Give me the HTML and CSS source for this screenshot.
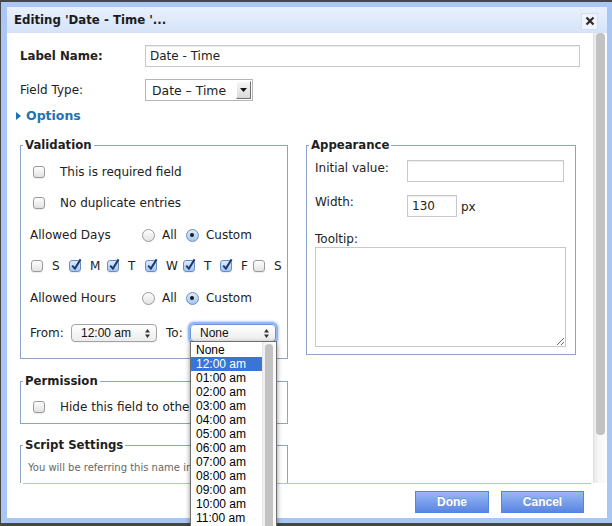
FILE: index.html
```html
<!DOCTYPE html>
<html>
<head>
<meta charset="utf-8">
<title>Editing</title>
<link rel="stylesheet" href="styles.css">
</head>
<body>
<div class="dialog">
  <div class="titlebar">
    <span class="title">Editing 'Date - Time '...</span>
    <span class="close"><svg width="10" height="10" viewBox="0 0 10 10"><path d="M1.5 1.5L8.5 8.5M8.5 1.5L1.5 8.5" stroke="#2b2b2b" stroke-width="2.2"/></svg></span>
  </div>
  <div class="scroll">
    <div class="pane">
      <div class="content">
        <div class="field-row">
          <span class="lbl bold">Label Name:</span>
          <input class="text wide" value="Date - Time">
        </div>
        <div class="field-row second">
          <span class="lbl">Field Type:</span>
          <div class="oldselect">
            <span class="oldval">Date – Time</span>
            <span class="oldarrow"><svg width="7" height="4" viewBox="0 0 7 4"><path d="M0 0H7L3.5 4Z" fill="#111"/></svg></span>
          </div>
        </div>
        <div class="options"><svg class="tri" width="5" height="8" viewBox="0 0 5 8"><path d="M0 0L5 4L0 8Z" fill="#1b72b8"/></svg>Options</div>
        <div class="columns">
          <div class="col-left">
            <fieldset class="fs">
              <legend>Validation</legend>
              <div class="vbody">
                <div class="vrow"><span class="cb ind"></span><span class="cbtext">This is required field</span></div>
                <div class="vrow"><span class="cb ind"></span><span class="cbtext">No duplicate entries</span></div>
                <div class="vrow plus1">
                  <span class="rlabel">Allowed Days</span>
                  <span class="rd"></span><span class="rtext">All</span>
                  <span class="rd on sp"></span><span class="rtext">Custom</span>
                </div>
                <div class="vrow days">
                  <span class="day"><span class="cb"></span>S</span>
                  <span class="day"><span class="cb on"><svg width="12" height="14" viewBox="0 0 12 14"><path d="M2.2 7.6L4.9 10.6L10.6 1.4" fill="none" stroke="#1d3a70" stroke-width="2"/></svg></span>M</span>
                  <span class="day"><span class="cb on"><svg width="12" height="14" viewBox="0 0 12 14"><path d="M2.2 7.6L4.9 10.6L10.6 1.4" fill="none" stroke="#1d3a70" stroke-width="2"/></svg></span>T</span>
                  <span class="day"><span class="cb on"><svg width="12" height="14" viewBox="0 0 12 14"><path d="M2.2 7.6L4.9 10.6L10.6 1.4" fill="none" stroke="#1d3a70" stroke-width="2"/></svg></span>W</span>
                  <span class="day"><span class="cb on"><svg width="12" height="14" viewBox="0 0 12 14"><path d="M2.2 7.6L4.9 10.6L10.6 1.4" fill="none" stroke="#1d3a70" stroke-width="2"/></svg></span>T</span>
                  <span class="day"><span class="cb on"><svg width="12" height="14" viewBox="0 0 12 14"><path d="M2.2 7.6L4.9 10.6L10.6 1.4" fill="none" stroke="#1d3a70" stroke-width="2"/></svg></span>F</span>
                  <span class="day"><span class="cb"></span>S</span>
                </div>
                <div class="vrow plus1">
                  <span class="rlabel">Allowed Hours</span>
                  <span class="rd"></span><span class="rtext">All</span>
                  <span class="rd on sp"></span><span class="rtext">Custom</span>
                </div>
                <div class="vrow plus4">
                  <span class="from">From:</span>
                  <span class="msel">12:00 am<svg class="updown" width="5" height="9" viewBox="0 0 5 9"><path d="M0 3.5L2.5 0L5 3.5ZM0 5.5L2.5 9L5 5.5Z" fill="#333"/></svg></span>
                  <span class="to">To:</span>
                  <span class="msel focus">None<svg class="updown" width="5" height="9" viewBox="0 0 5 9"><path d="M0 3.5L2.5 0L5 3.5ZM0 5.5L2.5 9L5 5.5Z" fill="#333"/></svg></span>
                </div>
              </div>
            </fieldset>
            <fieldset class="fs gap">
              <legend>Permission</legend>
              <div class="pbody">
                <div class="vrow"><span class="cb ind"></span><span class="cbtext">Hide this field to others</span></div>
              </div>
            </fieldset>
            <fieldset class="fs gap">
              <legend>Script Settings</legend>
              <div class="sbody">
                <p class="note">You will be referring this name in the scripts</p>
              </div>
            </fieldset>
          </div>
          <fieldset class="fs appearance">
            <legend>Appearance</legend>
            <div class="abody">
              <div class="agrid">
                <span class="alabel">Initial value:</span>
                <input class="text init">
                <span class="alabel">Width:</span>
                <span class="wcell"><input class="text wnum" value="130"><span class="px">px</span></span>
              </div>
              <div class="alabel tip">Tooltip:</div>
              <textarea class="tooltip"></textarea>
            </div>
          </fieldset>
        </div>
      </div>
    </div>
    <div class="vscroll"><div class="vthumb"></div></div>
  </div>
  <div class="footer">
    <button class="btn done">Done</button>
    <button class="btn cancel">Cancel</button>
  </div>
</div>
<div class="dropdown">
  <div class="dd-list">
    <div class="dd-item">None</div>
    <div class="dd-item sel">12:00 am</div>
    <div class="dd-item">01:00 am</div>
    <div class="dd-item">02:00 am</div>
    <div class="dd-item">03:00 am</div>
    <div class="dd-item">04:00 am</div>
    <div class="dd-item">05:00 am</div>
    <div class="dd-item">06:00 am</div>
    <div class="dd-item">07:00 am</div>
    <div class="dd-item">08:00 am</div>
    <div class="dd-item">09:00 am</div>
    <div class="dd-item">10:00 am</div>
    <div class="dd-item">11:00 am</div>
  </div>
  <div class="dd-bar"><div class="dd-thumb"></div></div>
</div>
</body>
</html>
```
FILE: styles.css
```css
html, body {
  margin: 0;
  height: 526px;
  overflow: hidden;
}
body {
  background: #474747;
  padding: 2px 0 0 1px;
  box-sizing: border-box;
  font-family: "DejaVu Sans", Verdana, sans-serif;
  font-size: 12px;
  color: #222;
  position: relative;
}
.dialog {
  width: 611px;
  height: 521px;
  box-sizing: border-box;
  border: 5px solid #aac6f4;
  border-left-width: 6px;
  background: #fff;
  display: flex;
  flex-direction: column;
}
.titlebar {
  height: 26px;
  flex: none;
  background: linear-gradient(#e9f0fd, #d5e3f9);
  display: flex;
  align-items: center;
  justify-content: space-between;
  padding: 0 9px 0 7px;
}
.title {
  font-weight: bold;
  font-size: 11.75px;
  color: #1c1c1c;
}
.close {
  width: 17px;
  height: 17px;
  box-sizing: border-box;
  border: 1px solid #d3def5;
  background: #eef3fd;
  display: flex;
  align-items: center;
  justify-content: center;
  margin-top: 2px;
}
.scroll {
  height: 450px;
  flex: none;
  display: flex;
}
.pane {
  flex: 1;
  min-width: 0;
  overflow: hidden;
}
.vscroll {
  width: 14px;
  flex: none;
  box-sizing: border-box;
  border-left: 1px solid #e0e0e0;
  background: linear-gradient(to right, #e9e9e9, #f6f6f6 35%, #fcfcfc);
  padding: 0 2px 0 2px;
}
.vthumb {
  height: 402px;
  border-radius: 4px;
  background: #c2c2c2;
}
.content {
  padding: 12px 13px 12px 13px;
}
.field-row {
  display: flex;
  align-items: center;
  height: 22px;
}
.field-row.second {
  margin-top: 12px;
}
.lbl {
  width: 125px;
  flex: none;
}
.bold {
  font-weight: bold;
  font-size: 11.75px;
}
.text {
  height: 22px;
  box-sizing: border-box;
  border: 1px solid #c8c8c8;
  box-shadow: inset 0 1px 1px #ececec;
  padding: 0 4px;
  font-family: "DejaVu Sans", Verdana, sans-serif;
  font-size: 12px;
  color: #222;
  outline: none;
  margin: 0;
}
.wide {
  flex: 1;
  min-width: 0;
}
.oldselect {
  width: 108px;
  height: 22px;
  box-sizing: border-box;
  border: 1px solid #b4b4b4;
  display: flex;
  align-items: center;
  justify-content: space-between;
  padding: 0 1px 0 6px;
}
.oldval {
  font-size: 12.4px;
}
.oldarrow {
  width: 15px;
  height: 18px;
  box-sizing: border-box;
  background: linear-gradient(#f6f6f6, #d9d9d9);
  border: 1px solid;
  border-color: #fff #6f6f6f #6f6f6f #fff;
  display: flex;
  align-items: center;
  justify-content: center;
}
.options {
  margin-top: 7px;
  height: 16px;
  line-height: 16px;
  font-weight: bold;
  font-size: 12.5px;
  color: #1d73b3;
  display: flex;
  align-items: center;
}
.tri {
  margin: 0 5px 0 -4px;
}
.columns {
  margin-top: 14px;
  display: flex;
  align-items: flex-start;
  gap: 18px;
}
.col-left {
  width: 268px;
  flex: none;
}
.fs {
  margin: 0;
  padding: 0;
  border: 1px solid #8ba5ca;
  min-width: 0;
}
.fs legend {
  margin-left: 2px;
  padding: 0 2px;
  font-weight: bold;
  font-size: 11.7px;
  line-height: 15px;
  color: #1e1e1e;
}
.fs.gap {
  margin-top: 14.5px;
}
.appearance {
  width: 270px;
  box-sizing: border-box;
  flex: none;
}
.vbody {
  padding: 9px 0 15px 9px;
  display: flex;
  flex-direction: column;
  gap: 11px;
}
.vrow {
  height: 20px;
  display: flex;
  align-items: center;
}
.vrow.plus1 {
  margin-top: 1px;
}
.vrow.plus4 {
  margin-top: 4px;
}
.cb {
  width: 12px;
  height: 12px;
  box-sizing: border-box;
  border: 1px solid #9a9a9a;
  border-radius: 3px;
  background: linear-gradient(#fefefe, #e2e2e2);
  box-shadow: 0 1px 1px rgba(0, 0, 0, 0.08);
  position: relative;
  flex: none;
}
.cb.ind {
  margin-left: 3px;
}
.cb.on {
  background: linear-gradient(#deebfc, #a3c6f1);
  border-color: #6a8ec3;
}
.cb.on svg {
  position: absolute;
  left: 0;
  top: -3px;
}
.cbtext {
  margin-left: 15px;
  white-space: nowrap;
}
.rlabel {
  width: 112px;
  flex: none;
}
.rd {
  width: 13px;
  height: 13px;
  box-sizing: border-box;
  border: 1px solid #9a9a9a;
  border-radius: 50%;
  background: linear-gradient(#fefefe, #e2e2e2);
  position: relative;
  flex: none;
}
.rd.on {
  background: linear-gradient(#deebfc, #a3c6f1);
  border-color: #6a8ec3;
}
.rd.on::after {
  content: "";
  position: absolute;
  left: 3.5px;
  top: 3.5px;
  width: 4px;
  height: 4px;
  border-radius: 50%;
  background: #1a1a1a;
}
.rd.sp {
  margin-left: 9px;
}
.rtext {
  margin-left: 7px;
}
.days {
  display: grid;
  grid-template-columns: 38px 38px 38px 38px 37px 33px auto;
  padding-left: 1px;
}
.day {
  display: flex;
  align-items: center;
  gap: 9px;
}
.from {
  width: 41px;
  flex: none;
}
.to {
  width: 24px;
  margin-left: 9px;
  flex: none;
}
.msel {
  width: 86px;
  height: 18px;
  box-sizing: border-box;
  border: 1px solid #a4a4a4;
  border-radius: 4px;
  background: linear-gradient(#ffffff, #ececec);
  box-shadow: 0 1px 0 rgba(0, 0, 0, 0.05);
  font-family: "Liberation Sans", Arial, sans-serif;
  font-size: 12px;
  color: #111;
  display: flex;
  align-items: center;
  padding-left: 9px;
  position: relative;
  flex: none;
}
.msel.focus {
  border-color: #6d95d6;
  box-shadow: 0 0 0 2px #93b8ef, 0 0 2px 3px rgba(110, 160, 230, 0.45);
}
.updown {
  position: absolute;
  right: 6px;
  top: 4px;
}
.pbody {
  padding: 8px 0 6px 9px;
}
.sbody {
  padding: 7px 6px 50px 7px;
}
.note {
  margin: 0;
  font-size: 10px;
  line-height: 16px;
  color: #666;
  white-space: nowrap;
}
.abody {
  padding: 7px 8px 7px 8px;
}
.agrid {
  display: grid;
  grid-template-columns: 92px 1fr;
  row-gap: 12px;
  align-items: start;
}
.alabel {
  line-height: 16px;
}
.init {
  width: 157px;
}
.wcell {
  display: flex;
  align-items: center;
}
.wnum {
  width: 50px;
}
.px {
  margin-left: 4px;
  line-height: 22px;
  padding-top: 2px;
}
.tip {
  margin-top: 13px;
}
.tooltip {
  display: block;
  width: 251px;
  height: 100px;
  box-sizing: border-box;
  border: 1px solid #c8c8c8;
  margin: 0;
  padding: 3px;
  font-family: "DejaVu Sans", Verdana, sans-serif;
  font-size: 12px;
  outline: none;
}
.footer {
  flex: none;
  height: 35px;
  box-sizing: border-box;
  margin: 0 16px;
  border-top: 1px solid #a9c3ef;
  display: flex;
  justify-content: flex-end;
  align-items: flex-start;
  gap: 12px;
  padding: 7px 7px 0 0;
}
.btn {
  height: 22px;
  box-sizing: border-box;
  border: 1px solid #5283e6;
  background: linear-gradient(#97b8f3, #5a86e2);
  color: #fff;
  font-family: "Liberation Sans", Arial, sans-serif;
  font-weight: bold;
  font-size: 12px;
  padding: 0;
  text-shadow: 0 -1px 0 rgba(40, 70, 150, 0.25);
}
.done {
  width: 74px;
}
.cancel {
  width: 83px;
}
.dropdown {
  position: absolute;
  left: 190px;
  top: 341px;
  width: 87px;
  height: 200px;
  box-sizing: border-box;
  background: #fff;
  border: 1px solid #6f6f6f;
  box-shadow: 0 2px 5px rgba(0, 0, 0, 0.45);
  display: flex;
  font-family: "Liberation Sans", Arial, sans-serif;
  font-size: 12px;
  color: #000;
}
.dd-list {
  flex: 1;
  padding-top: 1px;
}
.dd-item {
  height: 14px;
  line-height: 14px;
  padding-left: 5px;
  white-space: nowrap;
}
.dd-item.sel {
  background: #3875d7;
  color: #fff;
}
.dd-bar {
  width: 13px;
  flex: none;
  border-left: 1px solid #e4e4e4;
  background: linear-gradient(to right, #f0f0f0, #fafafa);
  position: relative;
}
.dd-thumb {
  position: absolute;
  left: 2px;
  top: 2px;
  width: 8px;
  height: 300px;
  border-radius: 4px;
  background: #c2c2c2;
}
```
